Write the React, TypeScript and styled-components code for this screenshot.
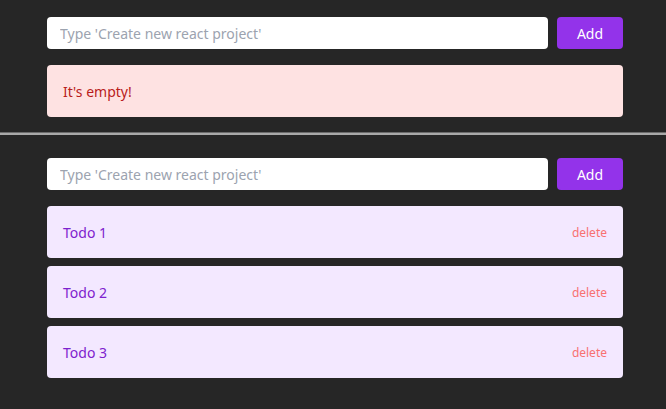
import styled, { createGlobalStyle } from "styled-components";

const GlobalStyle = createGlobalStyle`
  html, body {
    margin: 0;
    padding: 0;
    background: #262626;
  }
  body {
    font-family: "Noto Sans", "Open Sans", sans-serif;
  }
`;

const Style = {
  Page: styled.div`
    width: 100%;
    min-height: 409px;
    background: #262626;
  `,
  Section: styled.div<{ $top: number }>`
    width: 576px;
    margin: 0 auto;
    padding: ${(p) => p.$top}px 0 0 4px;
    display: flex;
    flex-direction: column;
    gap: 16px;
  `,
  Form: styled.form`
    display: flex;
    gap: 9px;
    height: 32px;
  `,
  Input: styled.input`
    flex: 1;
    height: 32px;
    box-sizing: border-box;
    border: none;
    border-radius: 4px;
    background: #ffffff;
    padding: 0 13px;
    font-family: inherit;
    font-size: 14px;
    color: #111;
    outline: none;

    &::placeholder {
      color: #9ca3af;
    }
  `,
  AddButton: styled.button`
    width: 66px;
    height: 32px;
    border: none;
    border-radius: 4px;
    background: #9333ea;
    color: #ffffff;
    font-family: inherit;
    font-size: 14px;
    cursor: pointer;
  `,
  Empty: styled.div`
    height: 52px;
    box-sizing: border-box;
    padding: 0 16px;
    display: flex;
    align-items: center;
    border-radius: 4px;
    background: #fee2e2;
    color: #b91c1c;
    font-size: 14px;
  `,
  Divider: styled.hr`
    margin: 15px 0 0;
    height: 0;
    border: none;
    border-top: 1px solid #6b6b6b;
    border-bottom: 2px solid #a9a9a9;
  `,
  List: styled.ul`
    list-style: none;
    margin: 0;
    padding: 0;
    display: flex;
    flex-direction: column;
    gap: 8px;
  `,
  Item: styled.li`
    height: 52px;
    box-sizing: border-box;
    padding: 0 16px;
    display: flex;
    align-items: center;
    justify-content: space-between;
    border-radius: 4px;
    background: #f3e8ff;
  `,
  Title: styled.span`
    color: #7e22ce;
    font-size: 14px;
  `,
  Delete: styled.button`
    border: none;
    background: none;
    padding: 0;
    color: #f87171;
    font-family: inherit;
    font-size: 12px;
    cursor: pointer;
  `,
};

const todos = ["Todo 1", "Todo 2", "Todo 3"];

function TodoForm() {
  return (
    <Style.Form onSubmit={(e) => e.preventDefault()}>
      <Style.Input placeholder="Type 'Create new react project'" />
      <Style.AddButton type="submit">Add</Style.AddButton>
    </Style.Form>
  );
}

export default function App() {
  return (
    <>
      <GlobalStyle />
      <Style.Page>
        <Style.Section $top={17}>
          <TodoForm />
          <Style.Empty>It's empty!</Style.Empty>
        </Style.Section>

        <Style.Divider />

        <Style.Section $top={23}>
          <TodoForm />
          <Style.List>
            {todos.map((t) => (
              <Style.Item key={t}>
                <Style.Title>{t}</Style.Title>
                <Style.Delete>delete</Style.Delete>
              </Style.Item>
            ))}
          </Style.List>
        </Style.Section>
      </Style.Page>
    </>
  );
}
